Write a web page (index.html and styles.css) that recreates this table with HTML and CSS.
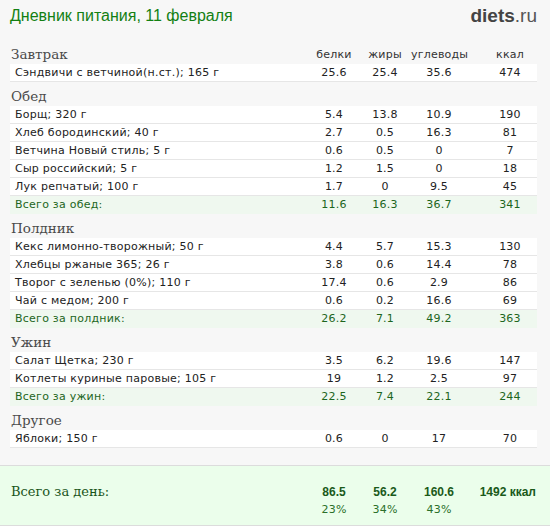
FILE: index.html
```html
<!DOCTYPE html>
<html lang="ru">
<head>
<meta charset="utf-8">
<title>Дневник питания</title>
<link rel="stylesheet" href="styles.css">
</head>
<body>
<div class="page">
  <div class="top">
    <div class="title">Дневник питания, 11 февраля</div>
    <div class="logo"><b>diets</b>.ru</div>
  </div>

  <div class="sec">
    <div class="head"><span class="hname">Завтрак</span><span>белки</span><span>жиры</span><span>углеводы</span><span class="kc">ккал</span></div>
    <div class="row"><span class="name">Сэндвичи с ветчиной(н.ст.); 165 г</span><span>25.6</span><span>25.4</span><span>35.6</span><span class="kc">474</span></div>
  </div>

  <div class="sec">
    <div class="head"><span class="hname">Обед</span></div>
    <div class="row"><span class="name">Борщ; 320 г</span><span>5.4</span><span>13.8</span><span>10.9</span><span class="kc">190</span></div>
    <div class="row"><span class="name">Хлеб бородинский; 40 г</span><span>2.7</span><span>0.5</span><span>16.3</span><span class="kc">81</span></div>
    <div class="row"><span class="name">Ветчина Новый стиль; 5 г</span><span>0.6</span><span>0.5</span><span>0</span><span class="kc">7</span></div>
    <div class="row"><span class="name">Сыр российский; 5 г</span><span>1.2</span><span>1.5</span><span>0</span><span class="kc">18</span></div>
    <div class="row"><span class="name">Лук репчатый; 100 г</span><span>1.7</span><span>0</span><span>9.5</span><span class="kc">45</span></div>
    <div class="row total"><span class="name">Всего за обед:</span><span>11.6</span><span>16.3</span><span>36.7</span><span class="kc">341</span></div>
  </div>

  <div class="sec">
    <div class="head"><span class="hname">Полдник</span></div>
    <div class="row"><span class="name">Кекс лимонно-творожный; 50 г</span><span>4.4</span><span>5.7</span><span>15.3</span><span class="kc">130</span></div>
    <div class="row"><span class="name">Хлебцы ржаные 365; 26 г</span><span>3.8</span><span>0.6</span><span>14.4</span><span class="kc">78</span></div>
    <div class="row"><span class="name">Творог с зеленью (0%); 110 г</span><span>17.4</span><span>0.6</span><span>2.9</span><span class="kc">86</span></div>
    <div class="row"><span class="name">Чай с медом; 200 г</span><span>0.6</span><span>0.2</span><span>16.6</span><span class="kc">69</span></div>
    <div class="row total"><span class="name">Всего за полдник:</span><span>26.2</span><span>7.1</span><span>49.2</span><span class="kc">363</span></div>
  </div>

  <div class="sec">
    <div class="head"><span class="hname">Ужин</span></div>
    <div class="row"><span class="name">Салат Щетка; 230 г</span><span>3.5</span><span>6.2</span><span>19.6</span><span class="kc">147</span></div>
    <div class="row"><span class="name">Котлеты куриные паровые; 105 г</span><span>19</span><span>1.2</span><span>2.5</span><span class="kc">97</span></div>
    <div class="row total"><span class="name">Всего за ужин:</span><span>22.5</span><span>7.4</span><span>22.1</span><span class="kc">244</span></div>
  </div>

  <div class="sec">
    <div class="head"><span class="hname">Другое</span></div>
    <div class="row"><span class="name">Яблоки; 150 г</span><span>0.6</span><span>0</span><span>17</span><span class="kc">70</span></div>
  </div>

  <div class="foot">
    <div class="fgrid">
      <span class="flabel">Всего за день:</span>
      <span class="fnum">86.5</span><span class="fnum">56.2</span><span class="fnum">160.6</span><span class="fnum fkc">1492 ккал</span>
      <span></span>
      <span class="fpct">23%</span><span class="fpct">34%</span><span class="fpct">43%</span><span></span>
    </div>
  </div>
</div>
</body>
</html>
```

FILE: styles.css
```css
html, body {
  margin: 0;
  padding: 0;
}
body {
  background: #f7f7f7;
}
.page {
  width: 550px;
  height: 526px;
  box-sizing: border-box;
  background: #f7f7f7;
  font-family: "DejaVu Sans", Verdana, sans-serif;
  font-size: 11px;
  color: #222;
  display: flex;
  flex-direction: column;
  overflow: hidden;
}
.top {
  height: 40px;
  box-sizing: border-box;
  display: flex;
  justify-content: space-between;
  align-items: flex-start;
  padding: 6px 13px 0 10px;
}
.title {
  font-family: "Liberation Sans", Arial, sans-serif;
  font-size: 16px;
  line-height: 20px;
  color: #138013;
}
.logo {
  font-family: "Liberation Sans", Arial, sans-serif;
  font-size: 19px;
  line-height: 20px;
  color: #555;
}
.logo b {
  color: #444;
}
.sec {
  padding: 0 13px 0 10px;
}
.head, .row, .fgrid {
  display: grid;
  grid-template-columns: 1fr 50px 52px 56px 70px;
}
.head {
  height: 24px;
  align-items: end;
  line-height: 19px;
  color: #333;
  text-align: center;
  letter-spacing: 0.2px;
}
.head .hname {
  text-align: left;
  font-family: "DejaVu Serif", Georgia, serif;
  font-size: 13.5px;
  letter-spacing: 0;
  padding-left: 1px;
  color: #4a4a4a;
}
.kc {
  padding-left: 16px;
}
.row {
  height: 18px;
  box-sizing: border-box;
  background: #fff;
  border-bottom: 1px solid #e6e6e6;
  line-height: 17px;
  text-align: center;
  letter-spacing: 0.25px;
}
.row .name {
  text-align: left;
  padding-left: 5px;
}
.row.total {
  background: #eff8ef;
  border-bottom: none;
  color: #1d661d;
}
.foot {
  margin-top: 17px;
  height: 62px;
  box-sizing: border-box;
  background: #ebfeeb;
  border-top: 1px solid #dcdcdc;
  border-bottom: 1px solid #dcdcdc;
  padding: 17px 13px 0 10px;
}
.fgrid {
  align-items: baseline;
  grid-auto-rows: 18px;
}
.flabel {
  font-family: "DejaVu Serif", Georgia, serif;
  font-size: 13px;
  line-height: 18px;
  color: #1a551a;
  padding-left: 1px;
}
.fnum {
  font-family: "Liberation Sans", Arial, sans-serif;
  font-weight: bold;
  font-size: 12px;
  line-height: 18px;
  color: #1a5a1a;
  text-align: center;
}
.fnum.fkc {
  padding-left: 0;
  text-align: right;
  padding-right: 1px;
}
.fpct {
  line-height: 18px;
  color: #2a702a;
  text-align: center;
  letter-spacing: 0.25px;
}
```
